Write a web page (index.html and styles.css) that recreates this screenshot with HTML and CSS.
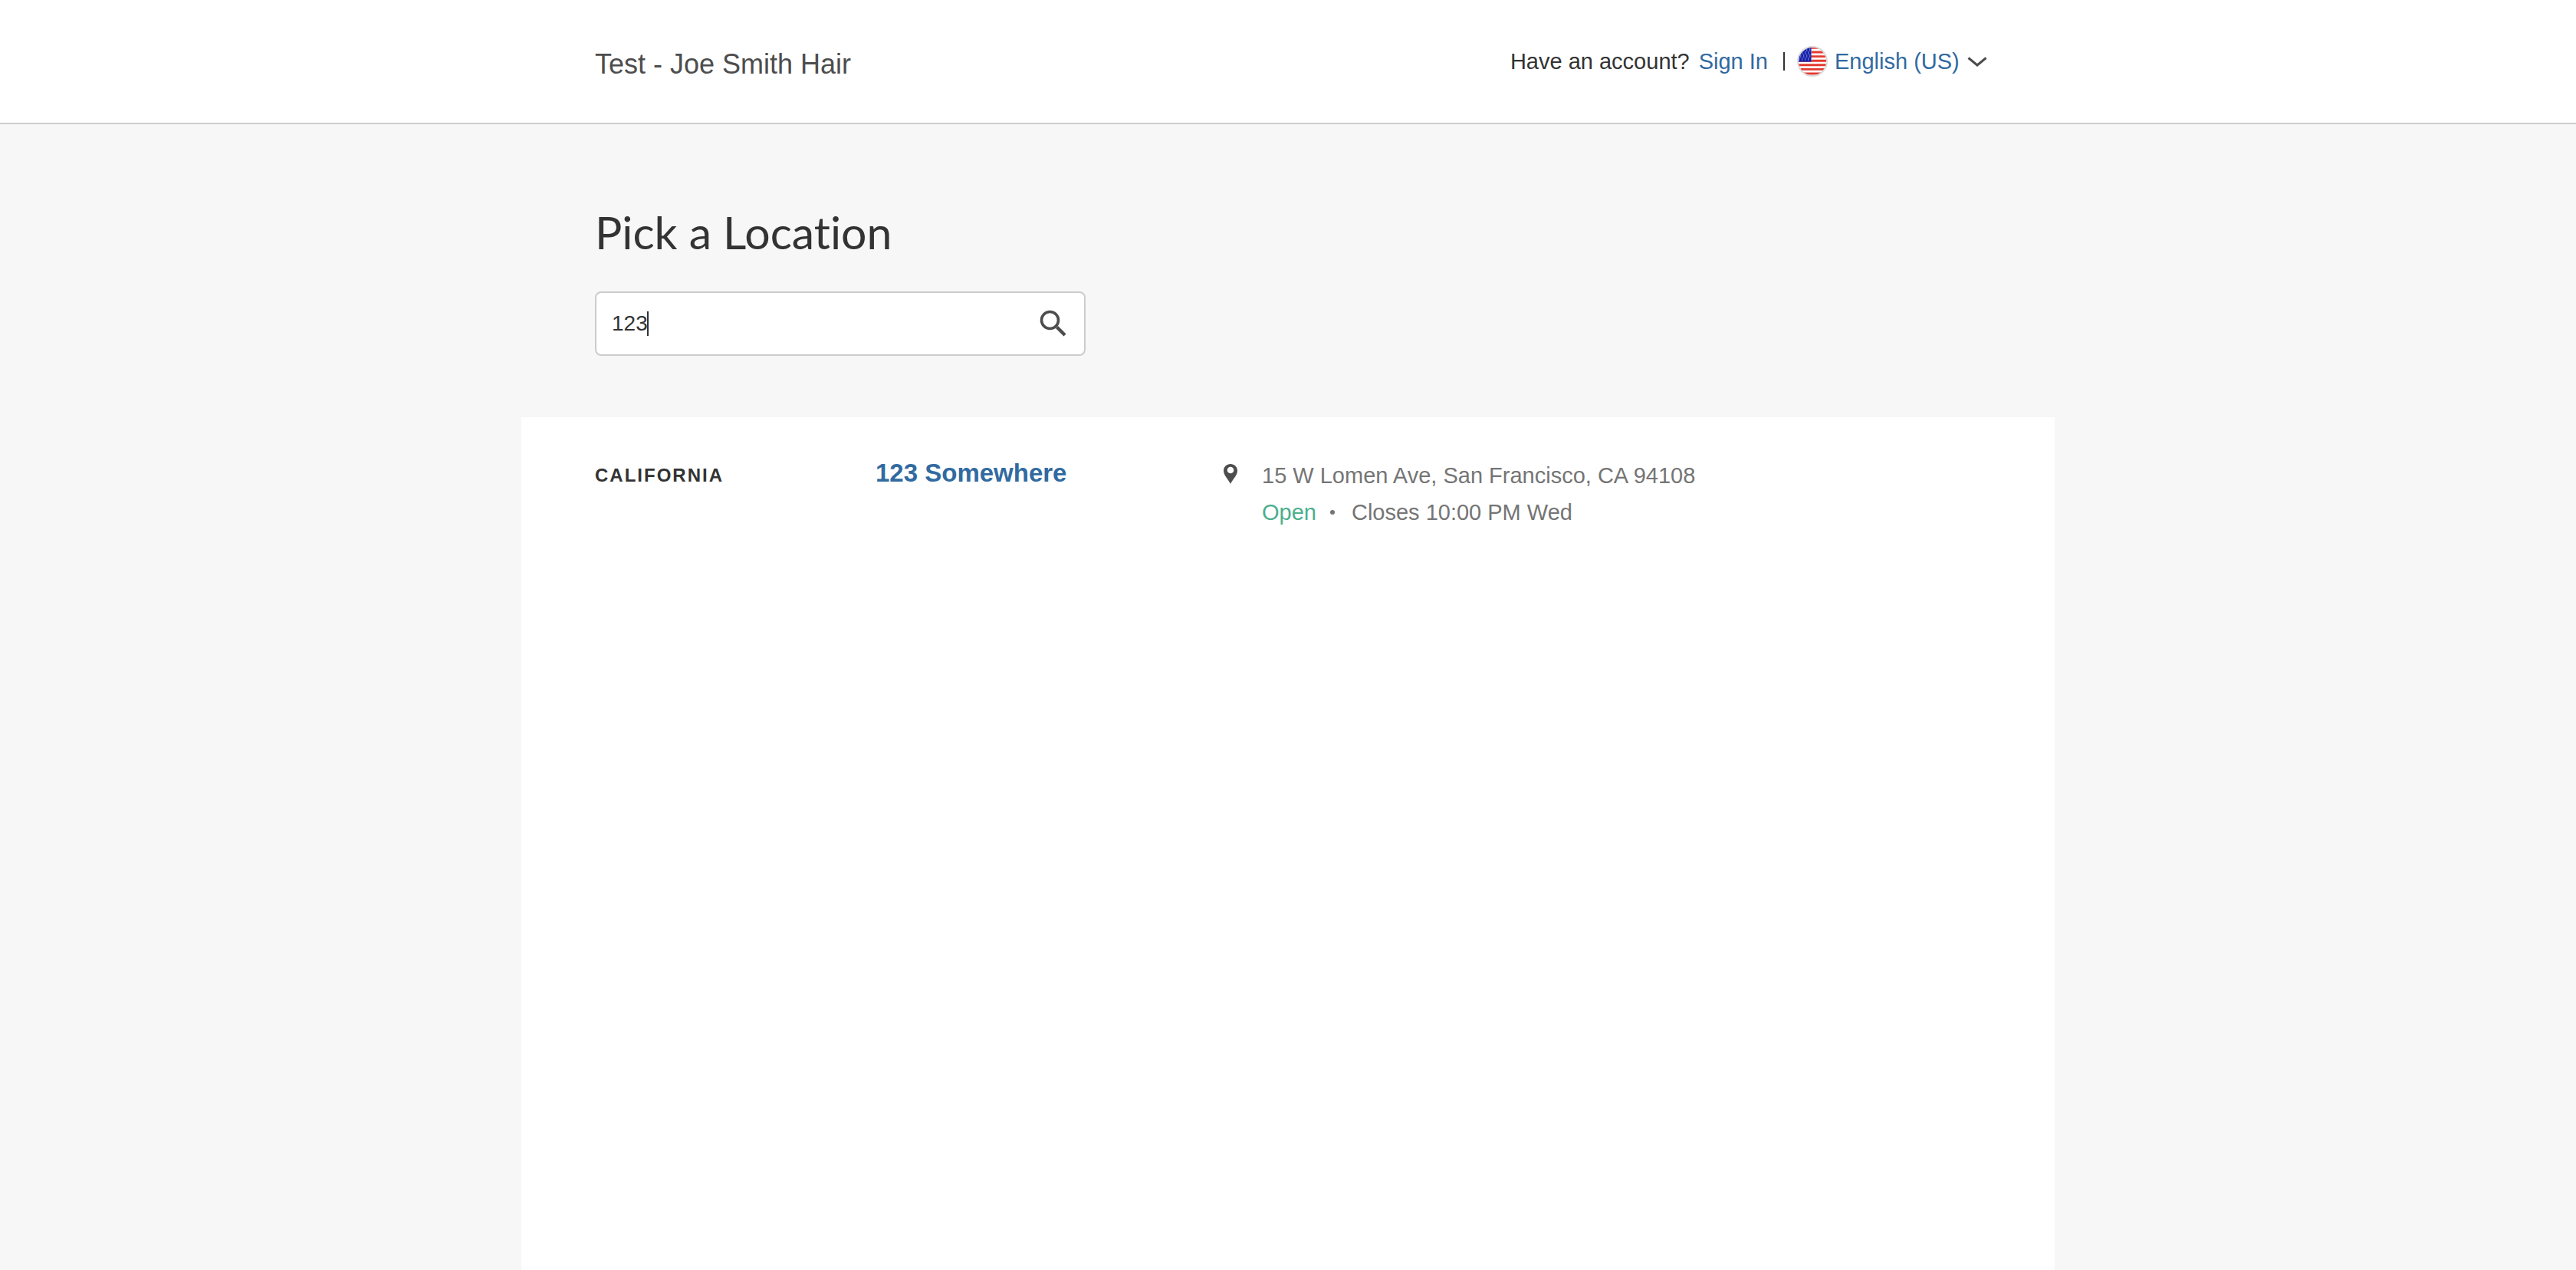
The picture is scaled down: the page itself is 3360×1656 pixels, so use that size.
FILE: index.html
```html
<!DOCTYPE html>
<html lang="en">
<head>
<meta charset="utf-8">
<meta name="viewport" content="width=device-width, initial-scale=1">
<title>Pick a Location</title>
<link rel="stylesheet" href="styles.css">
</head>
<body>
<header class="site-header">
  <div class="header-inner">
    <div class="business-name">Test - Joe Smith Hair</div>
    <div class="account">
      <span class="account-prompt">Have an account?</span>
      <a class="sign-in" href="#signin">Sign In</a>
      <span class="divider"></span>
      <svg class="flag" viewBox="0 0 40 40" aria-hidden="true">
        <defs><clipPath id="flag-round"><circle cx="20" cy="20" r="18.5"/></clipPath></defs>
        <g clip-path="url(#flag-round)">
          <rect width="40" height="40" fill="#fff"/>
          <path d="M0 3.2h40M0 8.8h40M0 14.4h40M0 20h40M0 25.6h40M0 31.2h40M0 36.8h40" transform="translate(0 -.8)" stroke="#e33b30" stroke-width="2.9"/>
          <rect width="18.5" height="20.6" fill="#1420a8"/>
          <path d="M4 6h15M2 10h17M4 14h15M2 18h17" stroke="#7f88d8" stroke-width="1.3" stroke-dasharray="1.3 2.7"/>
          <path d="M2 8h17M4 12h15M2 16h17M8 4h11" stroke="#7f88d8" stroke-width="1.3" stroke-dasharray="1.3 2.7"/>
        </g>
        <circle cx="20" cy="20" r="19" fill="none" stroke="#dcdcdc" stroke-width="2"/>
      </svg>
      <div class="language">
        <select class="language-select" aria-label="Language">
          <option>English (US)</option>
        </select>
        <svg class="chevron" viewBox="0 0 26 14" aria-hidden="true"><path d="M1.5 1.5L13 11L24.5 1.5" fill="none" stroke="#4d4d4d" stroke-width="3"/></svg>
      </div>
    </div>
  </div>
</header>
<main class="page">
  <section class="search">
    <h1 class="page-title">Pick a Location</h1>
    <form class="search-box">
      <input class="search-input" type="text" value="123" aria-label="Search locations">
      <span class="caret"></span>
      <button class="search-button" type="button" aria-label="Search">
        <svg class="search-icon" viewBox="0 0 36 36" aria-hidden="true"><circle cx="13.5" cy="13.5" r="11" fill="none" stroke="#4d4d4d" stroke-width="3.6"/><path d="M22.5 22.5L33 33" stroke="#4d4d4d" stroke-width="4.4"/></svg>
      </button>
    </form>
  </section>
  <section class="results">
    <div class="location">
      <h2 class="region">CALIFORNIA</h2>
      <a class="location-name" href="#location">123 Somewhere</a>
      <div class="details">
        <svg class="pin" viewBox="0 0 20 28" aria-hidden="true"><path fill="#4d4d4d" fill-rule="evenodd" d="M10 1C5 1 1 4.800 1 9.700C1 15.500 6.500 20 10 27C13.500 20 19 15.500 19 9.700C19 4.800 15 1 10 1ZM10 4.700A4.300 4.300 0 1 1 10 13.300A4.300 4.300 0 1 1 10 4.700Z"/></svg>
        <div class="details-text">
          <div class="address">15 W Lomen Ave, San Francisco, CA 94108</div>
          <div class="hours"><span class="status">Open</span><span class="dot"></span><span>Closes 10:00 PM Wed</span></div>
        </div>
      </div>
    </div>
  </section>
</main>
</body>
</html>
```
FILE: styles.css
```css
* {
  box-sizing: border-box;
}

body {
  margin: 0;
  min-height: 100vh;
  display: flex;
  flex-direction: column;
  background: #f7f7f7;
  color: #333;
  font-family: "Liberation Sans", Arial, sans-serif;
  font-size: 29px;
  line-height: 48px;
}

a {
  color: #316aa0;
  text-decoration: none;
}

.site-header {
  background: #fff;
  border-bottom: 2px solid #ccc;
}

.header-inner {
  display: flex;
  justify-content: space-between;
  align-items: center;
  width: 100%;
  max-width: 2000px;
  min-height: 160px;
  margin: 0 auto;
  padding: 0 88px 0 96px;
}

.business-name {
  padding-top: 8px;
  font-size: 36px;
  color: #4d4d4d;
}

.account {
  display: flex;
  align-items: center;
}

.sign-in {
  margin-left: 12px;
}

.divider {
  width: 2px;
  height: 24px;
  margin: 0 16px 0 20px;
  background: #333;
}

.flag {
  width: 40px;
  height: 40px;
}

.language {
  position: relative;
  margin-left: 9px;
}

.language-select {
  display: block;
  appearance: none;
  margin: 0;
  padding: 0 36px 0 0;
  border: 0;
  background: transparent;
  color: #316aa0;
  font: inherit;
}

.chevron {
  position: absolute;
  top: 18px;
  right: 0;
  width: 26px;
  height: 14px;
  pointer-events: none;
}

.page {
  flex: 1;
  display: flex;
  flex-direction: column;
  width: 100%;
  max-width: 2000px;
  margin: 0 auto;
  padding-top: 109px;
}

.search {
  padding: 0 96px 80px;
}

.page-title {
  margin: 0 0 45px;
  font-family: Lato, sans-serif;
  font-size: 59px;
  font-weight: 400;
  font-variant-ligatures: none;
  line-height: 64px;
}

.search-box {
  position: relative;
  display: flex;
  align-items: center;
  max-width: 640px;
  height: 84px;
  border: 2px solid #ccc;
  border-radius: 8px;
  background: #fff;
}

.search-input {
  flex: 1;
  min-width: 0;
  height: 100%;
  padding: 0 20px;
  border: 0;
  outline: 0;
  background: transparent;
  color: #333;
  font: inherit;
  font-size: 28px;
}

.caret {
  position: absolute;
  left: 66px;
  width: 2px;
  height: 32px;
  background: #333;
}

.search-button {
  display: flex;
  padding: 0 22px;
  border: 0;
  background: transparent;
}

.search-icon {
  width: 36px;
  height: 36px;
}

.results {
  flex: 1;
  padding: 52px 96px;
  background: #fff;
}

.location {
  display: grid;
  grid-template-columns: 366fr 453fr 989fr;
  align-items: start;
}

.region {
  margin: 0;
  font-size: 24px;
  letter-spacing: 2px;
  line-height: 48px;
}

.location-name {
  font-size: 33px;
  font-weight: 700;
  line-height: 42px;
}

.details {
  display: flex;
  gap: 31px;
  color: #757575;
}

.pin {
  flex: none;
  width: 20px;
  height: 28px;
  margin-top: 8px;
}

.hours {
  display: flex;
  align-items: center;
}

.status {
  color: #4caf8c;
}

.dot {
  width: 6px;
  height: 6px;
  margin: 0 22px 0 18px;
  border-radius: 50%;
  background: #757575;
}
```
